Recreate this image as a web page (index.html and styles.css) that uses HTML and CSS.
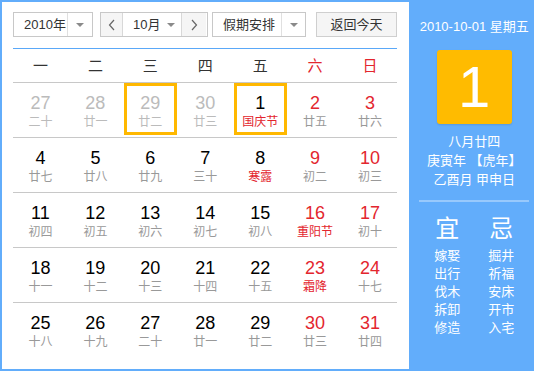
FILE: index.html
```html
<!DOCTYPE html>
<html lang="zh">
<head>
<meta charset="utf-8">
<link rel="stylesheet" href="styles.css">
</head>
<body>
<div class="widget">
  <div class="main">
    <div class="controls">
      <div class="select year">
        <span class="sel-text">2010年</span>
        <span class="sel-arrow"><i class="tri"></i></span>
      </div>
      <div class="month-group">
        <span class="nav-btn"><svg width="8" height="12" viewBox="0 0 8 12"><polyline points="6,1 1.5,6 6,11" fill="none" stroke="#666" stroke-width="1.2"/></svg></span>
        <span class="month-text">10月</span>
        <span class="month-arrow"><i class="tri"></i></span>
        <span class="nav-btn next"><svg width="8" height="12" viewBox="0 0 8 12"><polyline points="2,1 6.5,6 2,11" fill="none" stroke="#666" stroke-width="1.2"/></svg></span>
      </div>
      <div class="select holiday">
        <span class="sel-text">假期安排</span>
        <span class="sel-arrow"><i class="tri"></i></span>
      </div>
      <div class="today-btn">返回今天</div>
    </div>
    <div class="weekdays">
      <span>一</span><span>二</span><span>三</span><span>四</span><span>五</span><span class="red">六</span><span class="red">日</span>
    </div>
    <div class="days">
      <div class="row">
        <div class="cell other"><b>27</b><em>二十</em></div>
        <div class="cell other"><b>28</b><em>廿一</em></div>
        <div class="cell other hl"><b>29</b><em>廿二</em></div>
        <div class="cell other"><b>30</b><em>廿三</em></div>
        <div class="cell hl"><b>1</b><em class="fest">国庆节</em></div>
        <div class="cell wk"><b>2</b><em>廿五</em></div>
        <div class="cell wk"><b>3</b><em>廿六</em></div>
      </div>
      <div class="row">
        <div class="cell"><b>4</b><em>廿七</em></div>
        <div class="cell"><b>5</b><em>廿八</em></div>
        <div class="cell"><b>6</b><em>廿九</em></div>
        <div class="cell"><b>7</b><em>三十</em></div>
        <div class="cell"><b>8</b><em class="fest">寒露</em></div>
        <div class="cell wk"><b>9</b><em>初二</em></div>
        <div class="cell wk"><b>10</b><em>初三</em></div>
      </div>
      <div class="row">
        <div class="cell"><b>11</b><em>初四</em></div>
        <div class="cell"><b>12</b><em>初五</em></div>
        <div class="cell"><b>13</b><em>初六</em></div>
        <div class="cell"><b>14</b><em>初七</em></div>
        <div class="cell"><b>15</b><em>初八</em></div>
        <div class="cell wk"><b>16</b><em class="fest">重阳节</em></div>
        <div class="cell wk"><b>17</b><em>初十</em></div>
      </div>
      <div class="row">
        <div class="cell"><b>18</b><em>十一</em></div>
        <div class="cell"><b>19</b><em>十二</em></div>
        <div class="cell"><b>20</b><em>十三</em></div>
        <div class="cell"><b>21</b><em>十四</em></div>
        <div class="cell"><b>22</b><em>十五</em></div>
        <div class="cell wk"><b>23</b><em class="fest">霜降</em></div>
        <div class="cell wk"><b>24</b><em>十七</em></div>
      </div>
      <div class="row last">
        <div class="cell"><b>25</b><em>十八</em></div>
        <div class="cell"><b>26</b><em>十九</em></div>
        <div class="cell"><b>27</b><em>二十</em></div>
        <div class="cell"><b>28</b><em>廿一</em></div>
        <div class="cell"><b>29</b><em>廿二</em></div>
        <div class="cell wk"><b>30</b><em>廿三</em></div>
        <div class="cell wk"><b>31</b><em>廿四</em></div>
      </div>
    </div>
  </div>
  <div class="side">
    <div class="side-date">2010-10-01 星期五</div>
    <div class="big-day">1</div>
    <div class="lunar">
      <div>八月廿四</div>
      <div>庚寅年 【虎年】</div>
      <div>乙酉月 甲申日</div>
    </div>
    <div class="side-line"></div>
    <div class="yiji">
      <div class="col">
        <div class="yj-title">宜</div>
        <div>嫁娶</div><div>出行</div><div>伐木</div><div>拆卸</div><div>修造</div>
      </div>
      <div class="col">
        <div class="yj-title">忌</div>
        <div>掘井</div><div>祈福</div><div>安床</div><div>开市</div><div>入宅</div>
      </div>
    </div>
  </div>
</div>
</body>
</html>
```

FILE: styles.css
```css
* { box-sizing: border-box; margin: 0; padding: 0; }
html, body { width: 534px; height: 371px; overflow: hidden; }
body {
  font-family: "Liberation Sans", "Noto Sans CJK SC", sans-serif;
  background: #62adfb;
}
.widget {
  display: flex;
  width: 534px;
  height: 371px;
  background: #62adfb;
}
.main {
  width: 409px;
  height: 367px;
  margin: 2px 0 2px 2px;
  background: #fff;
  padding: 10px 12px 0 11px;
}
.controls {
  display: flex;
  height: 25px;
  font-size: 13px;
  color: #333;
}
.select {
  display: flex;
  height: 25px;
  border: 1px solid #c8c8c8;
  background: #fff;
}
.sel-text {
  line-height: 23px;
  padding-left: 10px;
  border-right: 1px solid #e0e0e0;
}
.sel-arrow {
  display: flex;
  align-items: center;
  justify-content: center;
}
.tri {
  display: block;
  width: 0; height: 0;
  border-left: 4px solid transparent;
  border-right: 4px solid transparent;
  border-top: 4px solid #8a8a8a;
}
.year { width: 80px; }
.year .sel-text { width: 55px; }
.year .sel-arrow { width: 24px; }
.month-group {
  display: flex;
  width: 108px;
  height: 25px;
  margin-left: 7px;
  border: 1px solid #c8c8c8;
}
.nav-btn {
  width: 22px;
  display: flex;
  align-items: center;
  justify-content: center;
  background: #f5f5f5;
  border-right: 1px solid #d8d8d8;
}
.nav-btn.next { border-right: 0; border-left: 1px solid #d8d8d8; width: 25px; }
.month-text {
  width: 44px;
  line-height: 23px;
  padding-left: 10px;
}
.month-arrow {
  width: 14px;
  display: flex;
  align-items: center;
  justify-content: flex-start;
}
.holiday { width: 94px; margin-left: 4px; }
.holiday .sel-text { width: 70px; }
.holiday .sel-arrow { width: 23px; }
.today-btn {
  width: 81px;
  margin-left: 10px;
  height: 25px;
  border: 1px solid #cfcfcf;
  background: #f5f5f5;
  text-align: center;
  line-height: 23px;
}
.weekdays {
  margin-top: 11px;
  border-top: 1px solid #5aa8f8;
  border-bottom: 1px solid #c8c8c8;
  height: 35px;
  display: grid;
  grid-template-columns: repeat(7, 1fr);
  font-size: 15px;
  color: #333;
  line-height: 33px;
  text-align: center;
}
.red { color: #e3262e; }
.row {
  display: grid;
  grid-template-columns: repeat(7, 1fr);
  height: 55px;
  border-bottom: 1px solid #c8c8c8;
}
.row.last { border-bottom: 0; }
.cell {
  position: relative;
  text-align: center;
  padding-top: 10px;
}
.cell b {
  display: block;
  font-weight: normal;
  font-size: 18px;
  line-height: 20px;
  color: #000;
}
.cell em {
  display: block;
  font-style: normal;
  font-size: 12px;
  line-height: 18px;
  color: #999;
}
.cell.wk b { color: #e3262e; }
.cell.other b { color: #bbb; }
.cell.other em { color: #bbb; }
.cell em.fest { color: #e3262e; }
.cell.hl::after {
  content: "";
  position: absolute;
  left: 1px; right: 1px; top: 0; bottom: 2px;
  border: 3px solid #ffb800;
}
.side {
  width: 125px;
  padding-left: 5px;
  color: #fff;
  display: flex;
  flex-direction: column;
  align-items: center;
}
.side-date {
  margin-top: 17px;
  font-size: 13px;
  line-height: 20px;
  white-space: nowrap;
}
.big-day {
  margin-top: 13px;
  width: 75px;
  height: 74px;
  background: #ffbb00;
  border-radius: 3px;
  box-shadow: 0 1px 2px rgba(0,0,0,0.12);
  font-size: 58px;
  line-height: 74px;
  text-align: center;
}
.lunar {
  margin-top: 8px;
  font-size: 13px;
  line-height: 19px;
  text-align: center;
}
.side-line {
  margin-top: 11px;
  width: 110px;
  height: 2px;
  background: rgba(255,255,255,0.35);
}
.yiji {
  display: flex;
  margin-top: 12px;
}
.col {
  width: 54px;
  text-align: center;
  font-size: 13px;
  line-height: 18px;
}
.yj-title {
  font-size: 24px;
  line-height: 30px;
  margin-bottom: 3px;
}
```
